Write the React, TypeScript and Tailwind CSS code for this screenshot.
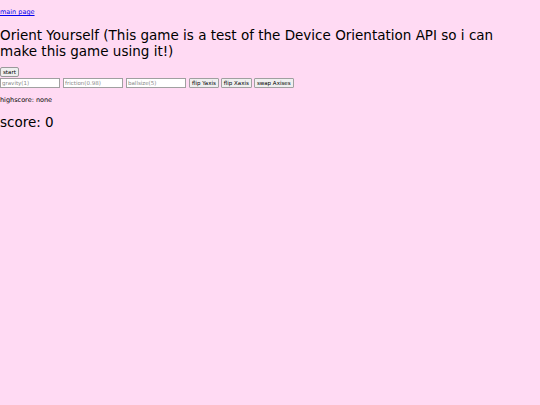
export default function App() {
  return (
    <div className="min-h-[405px] bg-[#ffdaf3] text-black font-['DejaVu_Sans',sans-serif] text-[6px] leading-[8px] pt-[8px]">
      <div className="text-[6.5px] leading-[8px]">
        <a href="#" className="text-[#0000ee] underline">
          main page
        </a>
      </div>
      <h1 className="mt-[11px] text-[13.5px] leading-[16px] w-[520px]">
        Orient Yourself (This game is a test of the Device Orientation API so i can make this game using it!)
      </h1>
      <div className="mt-[8px] flex">
        <button className="h-[10px] px-[2px] text-[5.5px] leading-[6px] bg-[#efefef] border border-[#9a9a9a] rounded-[2px]">
          start
        </button>
      </div>
      <div className="flex items-center gap-[3px] mt-[1px]">
        <input placeholder="gravity(1)" className="w-[60px] h-[10px] px-[1px] text-[5.5px] bg-white border border-[#a0a0a0] outline-none placeholder:text-[#8a8a8a]" />
        <input placeholder="friction(0.98)" className="w-[60px] h-[10px] px-[1px] text-[5.5px] bg-white border border-[#a0a0a0] outline-none placeholder:text-[#8a8a8a]" />
        <input placeholder="ballsize(5)" className="w-[60px] h-[10px] px-[1px] text-[5.5px] bg-white border border-[#a0a0a0] outline-none placeholder:text-[#8a8a8a]" />
        <button className="h-[10px] px-[2px] text-[5.5px] leading-[6px] bg-[#efefef] border border-[#a0a0a0] rounded-[1px]">flip Yaxis</button>
        <button className="h-[10px] px-[2px] text-[5.5px] leading-[6px] bg-[#efefef] border border-[#a0a0a0] rounded-[1px] -ml-[1px]">flip Xaxis</button>
        <button className="h-[10px] px-[2px] text-[5.5px] leading-[6px] bg-[#efefef] border border-[#a0a0a0] rounded-[1px] -ml-[1px]">swap Axises</button>
      </div>
      <p className="mt-[8px] text-[6.5px] leading-[8px]">highscore: none</p>
      <p className="mt-[10px] text-[13.5px] leading-[16px]">score: 0</p>
    </div>
  );
}
